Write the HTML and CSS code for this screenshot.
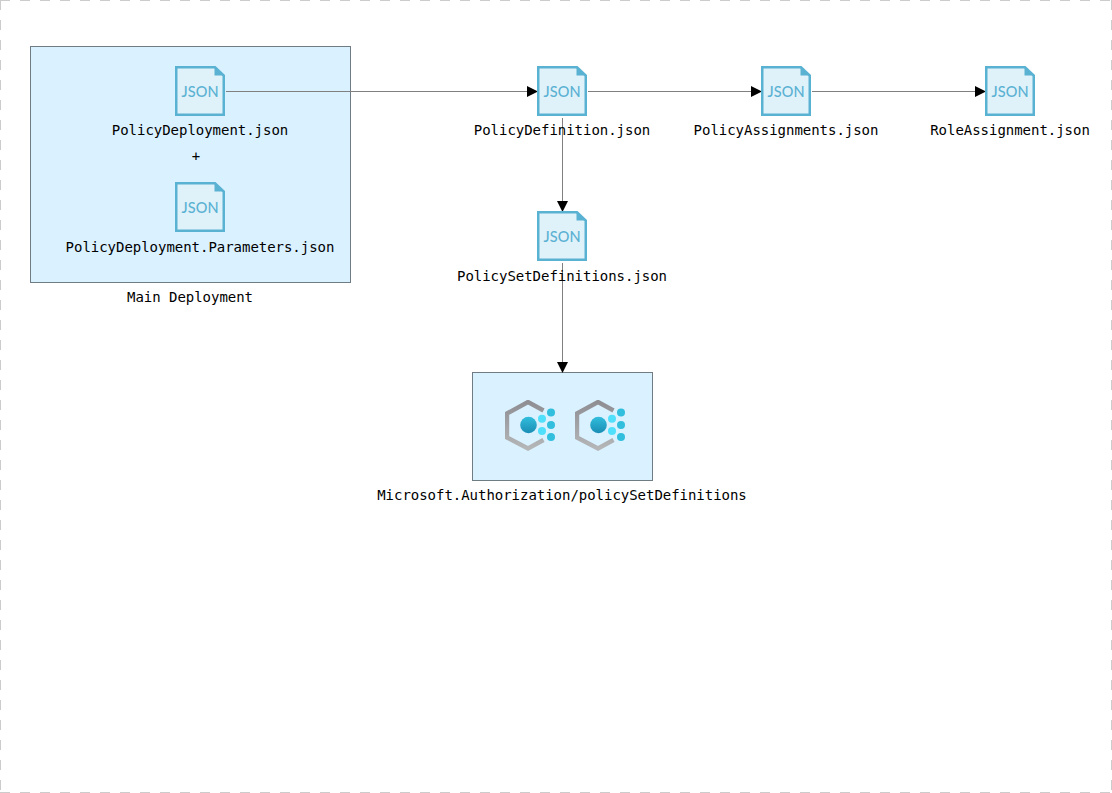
FILE: index.html
```html
<!DOCTYPE html>
<html lang="en">
<head>
<meta charset="utf-8">
<title>Policy deployment diagram</title>
<link rel="stylesheet" href="styles.css">
</head>
<body>
<main class="canvas">
  <svg class="defs" width="0" height="0" aria-hidden="true">
    <defs>
      <linearGradient id="hexgrad" x1="0" y1="0" x2="0" y2="1">
        <stop offset="0" stop-color="#8f8f93"/>
        <stop offset="1" stop-color="#b4b6b8"/>
      </linearGradient>
      <linearGradient id="coregrad" x1="0" y1="0" x2="0" y2="1">
        <stop offset="0" stop-color="#32bedd"/>
        <stop offset="1" stop-color="#1a8db5"/>
      </linearGradient>
      <symbol id="doc" viewBox="0 0 50 50">
        <path class="doc-body" d="M1.25 1.25H40L48.75 9.5V48.75H1.25Z"/>
        <path class="doc-fold" d="M39.5 0.5 49.5 9.5H39.5Z"/>
      </symbol>
      <symbol id="hex" viewBox="0 0 52 52">
        <path class="hex-ring" d="M38.5 10.5 23 2 2 13.5V37.5L23 48.5 38.5 40"/>
        <circle class="hex-core" cx="23.5" cy="25" r="8.3"/>
        <circle class="hex-inner" cx="37" cy="18.7" r="4"/>
        <circle class="hex-inner" cx="37" cy="31" r="4"/>
        <circle class="hex-outer" cx="46" cy="12.5" r="4"/>
        <circle class="hex-outer" cx="46" cy="25" r="4"/>
        <circle class="hex-outer" cx="46" cy="37" r="4"/>
      </symbol>
    </defs>
  </svg>

  <div class="group group-main"></div>
  <div class="group group-auth">
    <svg class="hex-icon" aria-hidden="true"><use href="#hex"/></svg>
    <svg class="hex-icon" aria-hidden="true"><use href="#hex"/></svg>
  </div>

  <svg class="edges" width="1112" height="793" aria-hidden="true">
    <g class="frame">
      <line x1="0" y1="0.5" x2="1112" y2="0.5"/>
      <line x1="0" y1="792.5" x2="1112" y2="792.5"/>
      <line x1="0.5" y1="0" x2="0.5" y2="793"/>
      <line x1="1111.5" y1="0" x2="1111.5" y2="793"/>
    </g>
    <g class="wires">
      <line x1="226" y1="91.5" x2="528" y2="91.5"/>
      <line x1="588" y1="91.5" x2="752" y2="91.5"/>
      <line x1="812" y1="91.5" x2="976" y2="91.5"/>
      <line x1="562.5" y1="118" x2="562.5" y2="202"/>
      <line x1="562.5" y1="263" x2="562.5" y2="363"/>
    </g>
    <g class="heads">
      <path d="M527 86 538 91.5 527 97Z"/>
      <path d="M751 86 762 91.5 751 97Z"/>
      <path d="M975 86 986 91.5 975 97Z"/>
      <path d="M557 201 568 201 562.5 212Z"/>
      <path d="M557 362 568 362 562.5 373Z"/>
    </g>
  </svg>

  <div class="node n-deploy">
    <div class="doc"><svg class="doc-icon" aria-hidden="true"><use href="#doc"/></svg><span class="doc-tag">JSON</span></div>
    <div class="label">PolicyDeployment.json</div>
  </div>
  <div class="label free plus">+</div>
  <div class="node n-params">
    <div class="doc"><svg class="doc-icon" aria-hidden="true"><use href="#doc"/></svg><span class="doc-tag">JSON</span></div>
    <div class="label">PolicyDeployment.Parameters.json</div>
  </div>
  <div class="label free main-caption">Main Deployment</div>

  <div class="node n-def">
    <div class="doc"><svg class="doc-icon" aria-hidden="true"><use href="#doc"/></svg><span class="doc-tag">JSON</span></div>
    <div class="label">PolicyDefinition.json</div>
  </div>
  <div class="node n-assign">
    <div class="doc"><svg class="doc-icon" aria-hidden="true"><use href="#doc"/></svg><span class="doc-tag">JSON</span></div>
    <div class="label">PolicyAssignments.json</div>
  </div>
  <div class="node n-role">
    <div class="doc"><svg class="doc-icon" aria-hidden="true"><use href="#doc"/></svg><span class="doc-tag">JSON</span></div>
    <div class="label">RoleAssignment.json</div>
  </div>
  <div class="node n-set">
    <div class="doc"><svg class="doc-icon" aria-hidden="true"><use href="#doc"/></svg><span class="doc-tag">JSON</span></div>
    <div class="label">PolicySetDefinitions.json</div>
  </div>
  <div class="label free auth-caption">Microsoft.Authorization/policySetDefinitions</div>
</main>
</body>
</html>
```
FILE: styles.css
```css
* { box-sizing: border-box; }
html, body { margin: 0; padding: 0; background: #fff; }
body { overflow: hidden; }

.canvas {
  position: relative;
  width: 1112px;
  height: 793px;
  overflow: hidden;
  font-family: "DejaVu Sans Mono", "Liberation Mono", monospace;
  font-size: 14px;
  letter-spacing: -0.03px;
  color: #000;
}

.defs { position: absolute; }
.edges { position: absolute; left: 0; top: 0; }

.frame line { stroke: #ccc; stroke-width: 1; stroke-dasharray: 10 10; }
.wires line { stroke: #808080; stroke-width: 1; }
.heads path { fill: #000; }

.group {
  position: absolute;
  background: #daf1ff;
  border: 1px solid #6f7c84;
}
.group-main { left: 30px; top: 46px; width: 321px; height: 237px; }
.group-auth {
  left: 472px; top: 372px; width: 181px; height: 109px;
  display: flex;
  justify-content: center;
  gap: 18px;
  padding: 27px 0 0 6px;
}
.hex-icon { width: 52px; height: 52px; flex: none; }
.hex-ring { fill: none; stroke: url(#hexgrad); stroke-width: 4.4; }
.hex-core { fill: url(#coregrad); }
.hex-inner { fill: #50e0fb; }
.hex-outer { fill: #32bedd; }

.node {
  position: absolute;
  width: 200px;
  display: flex;
  flex-direction: column;
  align-items: center;
  gap: 5px;
}
.n-deploy { left: 100px; top: 66px; }
.n-params { left: 50px; top: 182px; width: 300px; gap: 6px; }
.n-def { left: 462px; top: 66px; }
.n-assign { left: 686px; top: 66px; }
.n-role { left: 910px; top: 66px; }
.n-set { left: 442px; top: 211px; width: 240px; gap: 6px; }

.doc {
  position: relative;
  width: 50px;
  height: 50px;
  display: flex;
  align-items: center;
  justify-content: center;
}
.doc-icon { position: absolute; inset: 0; width: 50px; height: 50px; }
.doc-body { fill: #dff1f9; stroke: #5ab2d3; stroke-width: 2.5; }
.doc-fold { fill: #5ab2d3; }
.doc-tag {
  position: relative;
  margin-top: 2px;
  font-family: Lato, Roboto, sans-serif;
  font-size: 14.5px;
  font-weight: 500;
  letter-spacing: 0.1px;
  line-height: 50px;
  color: #5ab2d3;
}

.label { line-height: 18px; white-space: nowrap; }
.free { position: absolute; text-align: center; }
.plus { left: 176px; top: 147px; width: 40px; }
.main-caption { left: 90px; top: 288px; width: 200px; }
.auth-caption { left: 362px; top: 486px; width: 400px; }
```
